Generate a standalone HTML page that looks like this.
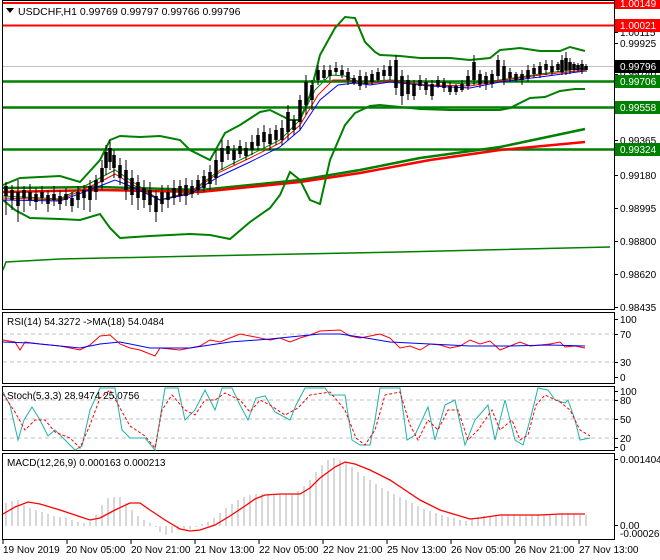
<!DOCTYPE html>
<html><head><style>
html,body{margin:0;padding:0;background:#fff;}
svg{display:block;font-family:"Liberation Sans",sans-serif;}
</style></head><body>
<svg width="660" height="560" viewBox="0 0 660 560" xmlns="http://www.w3.org/2000/svg">
<rect width="660" height="560" fill="#fff"/>
<g fill="none" stroke="#000" stroke-width="1">
<rect x="2.5" y="0.5" width="612" height="309"/>
<rect x="2.5" y="312.5" width="612" height="71"/>
<rect x="2.5" y="386.5" width="612" height="64"/>
<rect x="2.5" y="453.5" width="612" height="86"/>
</g>
<g stroke="#000"><line x1="614" y1="32.5" x2="618" y2="32.5"/><line x1="614" y1="43.5" x2="618" y2="43.5"/><line x1="614" y1="74.5" x2="618" y2="74.5"/><line x1="614" y1="140.5" x2="618" y2="140.5"/><line x1="614" y1="175.5" x2="618" y2="175.5"/><line x1="614" y1="208.5" x2="618" y2="208.5"/><line x1="614" y1="241.5" x2="618" y2="241.5"/><line x1="614" y1="274.5" x2="618" y2="274.5"/><line x1="614" y1="307.5" x2="618" y2="307.5"/>
<line x1="614" y1="319.5" x2="618" y2="319.5"/><line x1="614" y1="334.5" x2="618" y2="334.5"/><line x1="614" y1="362.5" x2="618" y2="362.5"/><line x1="614" y1="377.5" x2="618" y2="377.5"/>
<line x1="614" y1="391.5" x2="618" y2="391.5"/><line x1="614" y1="400.5" x2="618" y2="400.5"/><line x1="614" y1="419.5" x2="618" y2="419.5"/><line x1="614" y1="438.5" x2="618" y2="438.5"/><line x1="614" y1="447.5" x2="618" y2="447.5"/>
<line x1="614" y1="459.5" x2="618" y2="459.5"/><line x1="614" y1="525.5" x2="618" y2="525.5"/></g>
<line x1="3" y1="66.5" x2="614" y2="66.5" stroke="#c0c0c0"/>
<line x1="3" y1="3" x2="614" y2="3" stroke="#f00" stroke-width="2"/>
<line x1="3" y1="25.5" x2="614" y2="25.5" stroke="#f00" stroke-width="2"/>
<g stroke="#008000" stroke-width="2.5">
<line x1="3" y1="81.5" x2="614" y2="81.5"/>
<line x1="3" y1="107.5" x2="614" y2="107.5"/>
<line x1="3" y1="149.5" x2="614" y2="149.5"/>
</g>
<polyline fill="none" stroke="#008000" stroke-width="1.5" points="3,270 6,262 60,259 200,256 400,252 610,247"/>
<polyline fill="none" stroke="#008000" stroke-width="2.5" points="3,188 100,187 200,190 300,180 360,170 420,158 500,147 585,129"/>
<polyline fill="none" stroke="#f00" stroke-width="2.5" points="3,192 100,190 200,192 300,182 360,173 430,160 500,150 585,142"/>
<polyline fill="none" stroke="#008000" stroke-width="2" points="3,185 20,178 60,176 80,182 100,160 110,140 120,136 140,137 160,136 180,140 190,150 210,160 225,133 240,125 260,112 270,110 280,115 290,120 300,120 310,95 320,55 335,28 345,17 355,18 365,42 375,52 380,55 400,56 420,58 450,58 470,60 490,58 500,50 520,48 540,51 560,51 570,47 585,51"/>
<polyline fill="none" stroke="#008000" stroke-width="2" points="3,200 15,210 30,218 60,219 80,220 100,214 110,228 120,238 150,236 170,235 190,234 210,235 230,239 250,222 270,208 280,195 290,172 300,180 310,200 320,204 330,160 345,125 355,113 370,106 380,105 400,107 420,109 450,110 470,110 500,110 510,108 530,98 545,97 560,91 575,89 585,89"/>
<polyline fill="none" stroke="#008000" stroke-width="1" points="3,196 60,199 100,178 115,170 130,180 160,200 190,192 220,170 250,155 280,140 300,120 315,90 330,75 345,76 360,82 390,80 430,82 470,84 500,80 540,74 585,68"/>
<polyline fill="none" stroke="#f00" stroke-width="1" points="3,198 60,200 100,182 115,174 130,183 160,200 190,193 220,172 250,158 280,143 300,125 318,95 333,80 350,80 365,84 390,81 430,85 470,86 500,81 540,75 585,70"/>
<polyline fill="none" stroke="#00f" stroke-width="1" points="3,200 60,201 100,186 115,180 130,186 160,200 190,194 220,176 250,162 280,147 300,130 320,100 338,85 355,83 370,85 390,82 430,86 470,88 500,82 540,77 585,71"/>
<path fill="none" stroke="#000" stroke-width="1" d="M6 182V215M12 185V210M18 180V222M24 186V212M30 184V206M36 188V210M42 186V204M48 190V212M54 186V206M60 190V210M66 188V206M72 192V212M78 186V208M84 185V210M90 180V212M96 175V200M102 160V190M106 145V175M110 140V170M114 150V178M120 158V185M126 160V200M132 170V205M138 175V210M144 180V208M150 182V212M156 190V222M162 185V212M168 185V208M174 180V205M180 180V202M186 178V205M192 180V198M198 175V195M204 170V192M210 165V190M216 150V185M222 140V170M228 140V160M234 145V165M240 140V158M246 142V160M252 135V155M258 128V150M264 125V148M270 128V150M276 125V145M282 120V145M288 105V140M294 115V135M300 95V130M306 75V115M312 80V110M318 65V85M324 65V80M330 65V80M336 62V75M342 65V78M348 68V85M354 75V85M360 70V90M366 72V88M372 70V85M378 68V82M384 65V80M390 60V80M396 55V95M402 70V105M408 75V100M414 80V100M420 75V90M426 78V95M432 80V100M438 76V88M444 78V92M450 82V95M456 84V95M462 80V92M468 70V90M474 55V85M480 70V88M486 72V90M492 70V88M498 55V80M504 60V85M510 68V82M516 72V82M522 70V85M528 65V82M534 64V78M540 62V78M546 60V75M552 60V75M558 62V72M562 55V75M566 52V75M570 58V74M574 62V72M578 63V72M582 60V74M586 64V72"/>
<path fill="none" stroke="#000" stroke-width="3.5" d="M6 186V196M12 190V200M18 192V206M24 190V198M30 192V200M36 194V202M42 192V198M48 195V204M54 194V200M60 196V204M66 194V200M72 198V206M78 192V200M84 190V198M90 186V200M96 180V192M102 168V182M106 152V168M110 148V162M114 155V168M120 165V178M126 170V190M132 178V195M138 182V198M144 188V200M150 190V205M156 196V212M162 192V204M168 192V200M174 188V198M180 186V196M186 185V196M192 186V194M198 180V190M204 176V188M210 172V184M216 160V178M222 148V162M228 146V154M234 150V160M240 146V154M246 148V156M252 142V150M258 135V146M264 132V142M270 134V144M276 130V140M282 128V140M288 112V132M294 120V130M300 100V122M306 82V105M312 85V100M318 70V80M324 70V78M330 70V76M336 68V72M342 70V75M348 72V80M354 78V83M360 76V86M366 76V84M372 74V82M378 72V80M384 70V76M390 66V76M396 60V88M402 76V96M408 80V94M414 84V96M420 80V86M426 82V90M432 84V96M438 80V86M444 82V88M450 86V92M456 86V92M462 84V90M468 76V86M474 62V80M480 74V84M486 76V84M492 74V84M498 60V76M504 66V80M510 72V78M516 74V80M522 74V80M528 70V78M534 68V74M540 66V74M546 64V70M552 66V72M558 64V70M562 60V72M566 58V70M570 62V70M574 64V70M578 65V70M582 64V70M586 66V70"/>
<g font-size="10" fill="#000">
<text x="620" y="36">1.00115</text>
<text x="620" y="47">0.99925</text>
<text x="620" y="77">0.99740</text>
<text x="620" y="144">0.99365</text>
<text x="620" y="179">0.99180</text>
<text x="620" y="212">0.98995</text>
<text x="620" y="245">0.98800</text>
<text x="620" y="278">0.98620</text>
<text x="620" y="311">0.98435</text>
</g>
<g font-size="10" fill="#fff">
<rect x="615" y="-3" width="45" height="12" fill="#f00"/><text x="620" y="7">1.00149</text>
<rect x="615" y="19" width="45" height="13" fill="#f00"/><text x="620" y="29">1.00021</text>
<rect x="615" y="60" width="45" height="13" fill="#000"/><text x="620" y="70">0.99796</text>
<rect x="615" y="75" width="45" height="13" fill="#008000"/><text x="620" y="85">0.99706</text>
<rect x="615" y="101" width="45" height="13" fill="#008000"/><text x="620" y="111">0.99558</text>
<rect x="615" y="143" width="45" height="13" fill="#008000"/><text x="620" y="153">0.99324</text>
</g>
<path d="M6 8H14L10 13Z" fill="#000"/>
<text x="18" y="15" font-size="10.5" fill="#000">USDCHF,H1  0.99769 0.99797 0.99766 0.99796</text>
<g stroke="#c0c0c0" stroke-dasharray="4,3"><line x1="3" y1="334" x2="614" y2="334"/><line x1="3" y1="362" x2="614" y2="362"/></g>
<polyline fill="none" stroke="#f00" points="3,340 15,342 20,350 25,342 40,344 60,346 80,350 90,345 100,336 110,335 120,344 130,348 140,350 155,356 160,348 180,350 200,346 210,340 220,342 230,338 240,334 250,336 270,340 280,338 290,342 300,338 310,335 320,331 340,330 350,336 360,338 370,336 380,334 390,338 400,348 410,346 420,350 430,344 440,345 450,348 460,346 470,340 480,344 490,341 500,350 510,346 520,342 530,346 540,345 550,344 560,342 565,347 575,346 585,348"/>
<polyline fill="none" stroke="#00f" points="3,342 30,343 60,346 80,348 100,344 120,342 150,348 190,348 230,342 270,339 300,336 320,334 340,334 360,337 390,342 430,344 470,346 510,346 550,345 585,346"/>
<g font-size="10" fill="#000">
<text x="7" y="325">RSI(14) 54.3272  -&gt;MA(18) 54.0484</text>
<text x="620" y="323">100</text><text x="620" y="338">70</text><text x="620" y="366">30</text><text x="620" y="381">0</text>
</g>
<g stroke="#c0c0c0" stroke-dasharray="4,3"><line x1="3" y1="400" x2="614" y2="400"/><line x1="3" y1="419" x2="614" y2="419"/><line x1="3" y1="438" x2="614" y2="438"/></g>
<polyline fill="none" stroke="#20b2aa" points="3,392 10,405 18,440 24,420 32,407 40,420 48,436 55,430 65,440 75,450 82,446 90,410 100,388 115,388 122,430 130,438 145,438 155,450 165,388 178,388 185,420 195,410 205,390 215,410 222,388 232,388 240,405 248,420 256,398 265,396 275,412 290,420 296,405 305,388 325,388 330,395 345,395 352,440 360,445 370,445 375,420 380,388 400,388 407,440 415,435 428,407 435,440 445,405 455,400 465,445 475,420 488,405 495,440 505,400 515,440 523,445 530,420 538,388 548,390 555,400 565,403 568,400 575,420 580,440 590,438"/>
<polyline fill="none" stroke="#f00" stroke-dasharray="3,2" points="3,394 15,412 25,430 35,420 45,420 55,432 70,438 80,448 90,425 100,398 110,390 120,408 130,426 145,436 155,448 162,410 172,395 185,410 195,415 205,400 215,400 225,393 240,400 250,412 260,400 270,405 285,415 298,408 310,395 330,392 345,410 356,438 365,445 375,430 385,395 400,392 410,425 418,440 428,420 438,430 448,410 458,410 468,440 478,430 492,410 500,430 512,420 520,440 528,435 536,405 545,395 560,402 570,410 580,430 590,436"/>
<g font-size="10" fill="#000">
<text x="7" y="399">Stoch(5,3,3) 28.9474 25.0756</text>
<text x="620" y="395">100</text><text x="620" y="404">80</text><text x="620" y="423">50</text><text x="620" y="442">20</text><text x="620" y="451">0</text>
</g>
<path fill="none" stroke="#b0b0b0" stroke-width="1" d="M6 526V503M12 526V501M18 526V500M24 526V505M30 526V508M36 526V510M42 526V512M48 526V514M54 526V516M60 526V517M66 526V518M72 526V520M78 526V522M84 526V523M90 526V522M96 526V515M102 526V505M108 526V498M114 526V497M120 526V497M126 526V503M132 526V510M138 526V516M144 526V520M150 526V523M156 526V527M160 526V532M166 526V535M172 526V533M178 526V530M184 526V529M190 526V529M196 526V527M202 526V524M208 526V522M214 526V518M220 526V513M226 526V508M232 526V504M238 526V500M244 526V497M250 526V495M256 526V494M262 526V494M268 526V494M274 526V494M280 526V494M286 526V494M292 526V494M298 526V491M304 526V486M310 526V480M316 526V472M322 526V465M328 526V460M334 526V458M340 526V460M346 526V463M352 526V467M358 526V472M364 526V476M370 526V480M376 526V484M382 526V488M388 526V491M394 526V494M400 526V497M406 526V500M412 526V503M418 526V506M424 526V509M430 526V511M436 526V513M442 526V515M448 526V517M454 526V518M460 526V520M466 526V521M472 526V518M478 526V517M484 526V516M490 526V517M496 526V516M502 526V514M508 526V514M514 526V514M520 526V515M526 526V516M532 526V515M538 526V514M544 526V515M550 526V514M556 526V515M562 526V513M568 526V513M574 526V514M580 526V515M586 526V515"/>
<polyline fill="none" stroke="#f00" stroke-width="1.3" points="3,514 15,507 28,502 40,504 60,510 75,515 90,520 100,518 115,510 130,503 140,503 150,510 165,520 180,529 190,531 200,530 215,525 230,516 245,506 255,499 265,495 280,494 300,494 310,488 320,478 335,467 345,462 355,464 370,470 390,480 405,490 420,500 440,510 460,516 470,519 480,518 500,515 520,515 540,515 560,514 585,514"/>
<g font-size="10" fill="#000">
<text x="7" y="466">MACD(12,26,9) 0.000163 0.000213</text>
<text x="620" y="463">0.001404</text><text x="620" y="529">0.00</text><text x="620" y="537">-0.000266</text>
</g>
<g stroke="#000"><line x1="3" y1="540" x2="3" y2="544"/><line x1="67" y1="540" x2="67" y2="544"/><line x1="131" y1="540" x2="131" y2="544"/><line x1="195" y1="540" x2="195" y2="544"/><line x1="259" y1="540" x2="259" y2="544"/><line x1="323" y1="540" x2="323" y2="544"/><line x1="387" y1="540" x2="387" y2="544"/><line x1="451" y1="540" x2="451" y2="544"/><line x1="515" y1="540" x2="515" y2="544"/><line x1="579" y1="540" x2="579" y2="544"/></g>
<g font-size="10" fill="#000">
<text x="3" y="553">19 Nov 2019</text><text x="66" y="553">20 Nov 05:00</text><text x="131" y="553">20 Nov 21:00</text><text x="195" y="553">21 Nov 13:00</text><text x="259" y="553">22 Nov 05:00</text><text x="323" y="553">22 Nov 21:00</text><text x="387" y="553">25 Nov 13:00</text><text x="451" y="553">26 Nov 05:00</text><text x="515" y="553">26 Nov 21:00</text><text x="579" y="553">27 Nov 13:00</text>
</g>
</svg>
</body></html>
